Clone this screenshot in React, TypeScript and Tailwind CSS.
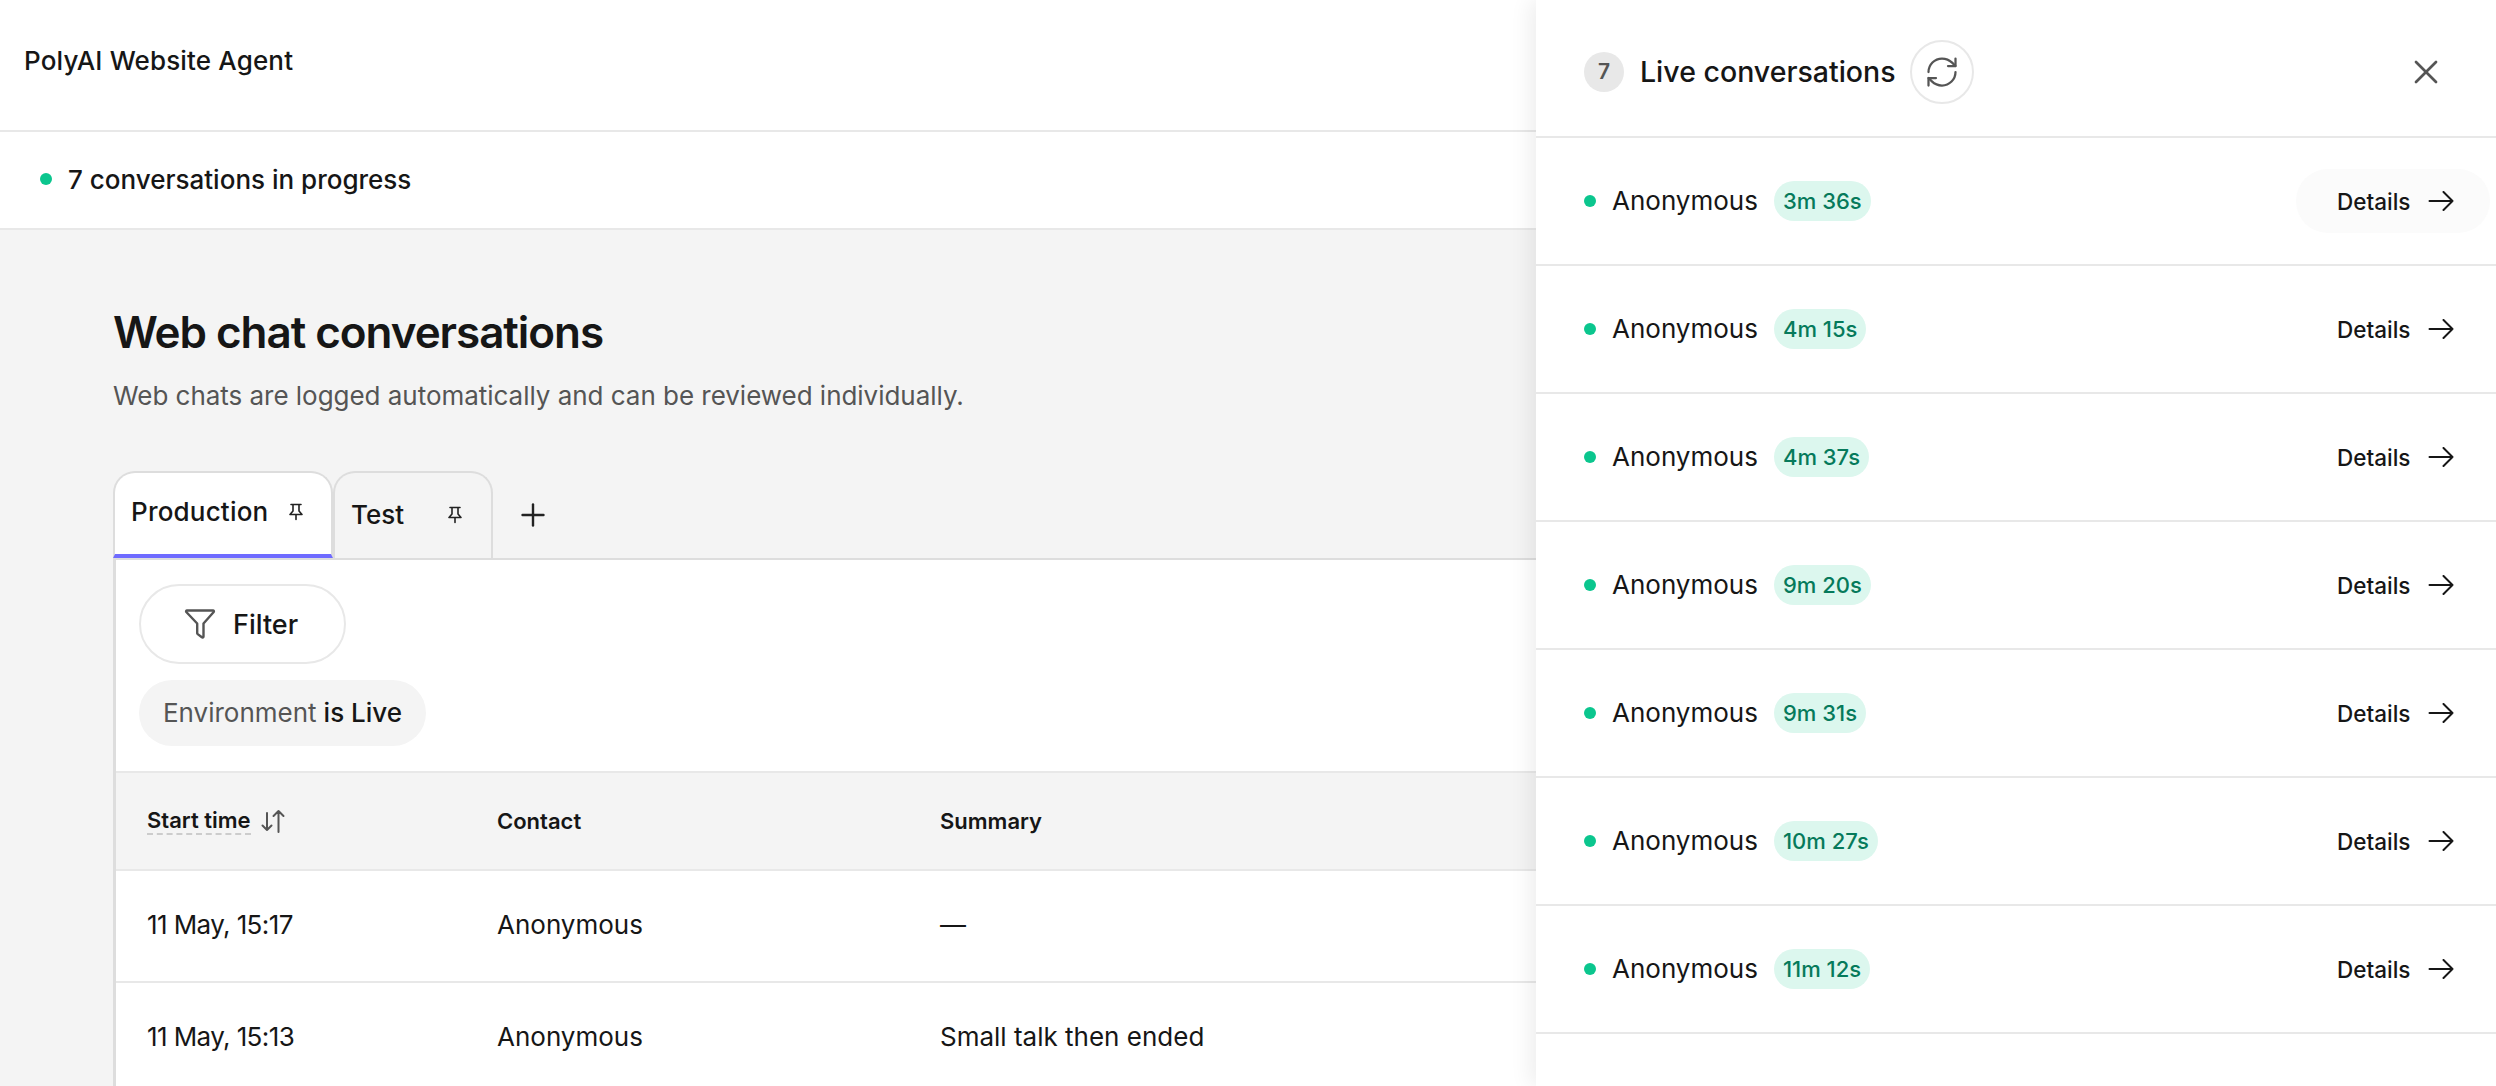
// Live conversations page
import { Plus, RefreshCw, X } from "lucide-react"

const liveRows = ["3m 36s", "4m 15s", "4m 37s", "9m 20s", "9m 31s", "10m 27s", "11m 12s"]

const tableRows = [
  { id: 1, time: "11 May, 15:17", contact: "Anonymous", summary: "—" },
  { id: 2, time: "11 May, 15:13", contact: "Anonymous", summary: "Small talk then ended" },
]

function PinIcon() {
  return (
    <svg width="16" height="18" viewBox="0 0 16 18" fill="none" stroke="#222" strokeWidth="1.6" strokeLinejoin="round" strokeLinecap="round">
      <path d="M3 1.500h10M5 1.500v6.500L2 11.500h12L11 8V1.500M8 11.500v5" />
    </svg>
  )
}

function FunnelIcon() {
  return (
    <svg width="32" height="32" viewBox="0 0 32 32" fill="none" stroke="#555" strokeWidth="2.4" strokeLinejoin="round" strokeLinecap="round">
      <path d="M3 2.500h26c.8 0 1.200.9.7 1.500L19.500 15.500v13c0 .9-.9 1.300-1.600.8l-4.200-3.200c-.3-.2-.5-.6-.5-.9v-9.700L2.300 4C1.800 3.400 2.200 2.500 3 2.500z" />
    </svg>
  )
}

function SortIcon() {
  return (
    <svg width="26" height="26" viewBox="0 0 26 26" fill="none" stroke="#555" strokeWidth="2" strokeLinejoin="round" strokeLinecap="round">
      <path d="M7 5v17M2.500 17.500 7 22l4.500-4.500M18.500 24V3M13.500 8l5-5 5 5" />
    </svg>
  )
}

function ArrowIcon() {
  return (
    <svg width="26" height="20" viewBox="0 0 26 20" fill="none" stroke="#161616" strokeWidth="2" strokeLinejoin="round" strokeLinecap="round">
      <path d="M1.500 10h23M15.500 1l9 9-9 9" />
    </svg>
  )
}

export default function App() {
  return (
    <div className="relative h-[1086px] w-[2496px] overflow-hidden bg-[#f4f4f4] font-['Inter',sans-serif] text-[#161616]">
      <header className="flex h-[132px] items-center border-b-2 border-[#e8e8e8] bg-white pb-[10px] pl-6">
        <p className="text-[26px] font-medium tracking-[0.15px]">PolyAI Website Agent</p>
      </header>

      <div className="flex h-[98px] items-center gap-4 border-b-2 border-[#e8e8e8] bg-white pb-[2px] pl-10">
        <span className="h-3 w-3 rounded-full bg-[#0bc68e]" />
        <p className="text-[26px] font-medium">7 conversations in progress</p>
      </div>

      <main className="pl-[113px]">
        <h1 className="pt-[76px] text-[44px] leading-[52px] font-semibold tracking-[-1.05px]">Web chat conversations</h1>
        <p className="pt-[20px] text-[26px] leading-[36px] tracking-[-0.03px] text-[#555]">Web chats are logged automatically and can be reviewed individually.</p>

        <div className="mt-[57px] flex h-[89px] items-stretch border-b-2 border-[#ddd]">
          <div className="flex w-[220px] items-center gap-[20px] rounded-t-[22px] border-x-2 border-t-2 border-b-[4px] border-x-[#ddd] border-t-[#ddd] border-b-[#6f6bff] bg-white pb-1 pl-[16px]">
            <span className="text-[26px] font-medium tracking-[0.2px]">Production</span>
            <PinIcon />
          </div>
          <div className="flex w-[160px] items-center rounded-t-[22px] border-x-2 border-t-2 border-[#ddd] pb-[2px] pl-[16px]">
            <span className="w-[96px] text-[26px] font-medium">Test</span>
            <PinIcon />
          </div>
          <button className="ml-[22px] flex items-center">
            <Plus size={36} strokeWidth={1.6} color="#222" />
          </button>
        </div>

        <section className="border-l-[3px] border-[#ddd] bg-white">
          <div className="flex flex-col items-start gap-4 pt-6 pl-[23px] pb-[25px]">
            <button className="flex h-[80px] w-[207px] items-center gap-[17px] rounded-full border-2 border-[#e8e8e8] pl-[43px]">
              <FunnelIcon />
              <span className="mt-[2px] text-[27px] font-medium">Filter</span>
            </button>
            <div className="flex h-[66px] w-[287px] items-center justify-center gap-[7px] rounded-full bg-[#f4f4f4] pb-[2px] text-[26px]">
              <span className="text-[#555]">Environment</span>
              <span className="font-medium">is Live</span>
            </div>
          </div>

          <div className="grid h-[100px] grid-cols-[350px_443px_1fr] items-center border-y-2 border-[#e8e8e8] bg-[#f4f4f4] pl-[31px] text-[22px] font-semibold">
            <div className="flex items-center gap-[9px]">
              <span className="border-b-2 border-dashed border-[#ccc] leading-[26px]">Start time</span>
              <SortIcon />
            </div>
            <span>Contact</span>
            <span>Summary</span>
          </div>

          {tableRows.map((row) => (
            <div key={row.id} className="grid h-[112px] grid-cols-[350px_443px_1fr] items-center border-b-2 border-[#e8e8e8] pb-[3px] pl-[31px] text-[26px]">
              <span className="tracking-[-0.6px]">{row.time}</span>
              <span>{row.contact}</span>
              <span>{row.summary}</span>
            </div>
          ))}
        </section>
      </main>

      <aside className="absolute top-0 right-0 bottom-0 w-[960px] bg-white shadow-[-6px_0_20px_rgba(0,0,0,0.07)]">
        <div className="flex h-[138px] items-center border-b-2 border-[#e8e8e8] pt-2 pl-12">
          <span className="flex h-10 w-10 items-center justify-center rounded-full bg-[#e8e8e8] text-[21px] font-semibold text-[#555]">7</span>
          <h2 className="ml-4 text-[28.5px] font-medium">Live conversations</h2>
          <button className="ml-[14px] flex h-16 w-16 items-center justify-center rounded-full border-2 border-[#e8e8e8]">
            <RefreshCw size={36} strokeWidth={1.5} color="#555" />
          </button>
          <button className="mr-[50px] ml-auto">
            <X size={40} strokeWidth={1.6} color="#555" />
          </button>
        </div>

        {liveRows.map((duration, i) => (
          <div key={duration} className="flex h-[128px] items-center border-b-2 border-[#e8e8e8] pl-12">
            <span className="h-3 w-3 rounded-full bg-[#0bc68e]" />
            <span className="mb-[2px] ml-4 text-[26px]">Anonymous</span>
            <span className="ml-4 flex h-10 items-center rounded-full bg-[#dcf7ee] px-[9px] text-[22px] font-medium text-[#067a5b]">{duration}</span>
            <button className={i === 0 ? "mr-[6px] ml-auto flex h-16 w-[194px] items-center gap-[18px] rounded-full bg-[#fbfbfb] pl-[41px]" : "mr-[6px] ml-auto flex h-16 w-[194px] items-center gap-[18px] rounded-full pl-[41px]"}>
              <span className="mt-[1px] text-[22.5px] font-medium">Details</span>
              <ArrowIcon />
            </button>
          </div>
        ))}
      </aside>
    </div>
  )
}
